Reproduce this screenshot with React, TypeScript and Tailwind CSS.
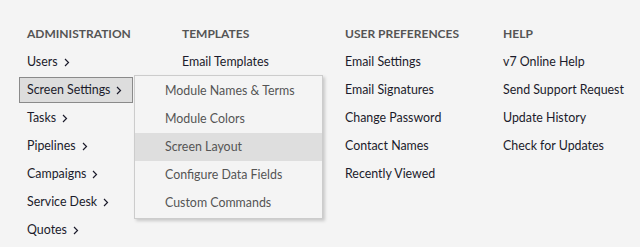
import React from 'react';

const ADMIN_ITEMS = ['Users', 'Screen Settings', 'Tasks', 'Pipelines', 'Campaigns', 'Service Desk', 'Quotes'];

const SUBMENU = ['Module Names & Terms', 'Module Colors', 'Screen Layout', 'Configure Data Fields', 'Custom Commands'];

const COLUMNS = [
    { title: 'TEMPLATES', width: 'w-[163px]', items: ['Email Templates'] },
    {
        title: 'USER PREFERENCES',
        width: 'w-[158px]',
        items: ['Email Settings', 'Email Signatures', 'Change Password', 'Contact Names', 'Recently Viewed'],
    },
    {
        title: 'HELP',
        width: 'w-[137px]',
        items: ['v7 Online Help', 'Send Support Request', 'Update History', 'Check for Updates'],
    },
];

const Chevron = () => (
    <svg width="6" height="9" viewBox="0 0 6 9" className="ml-[6px] mt-[1px] shrink-0">
        <path d="M1 1 L4.5 4.5 L1 8" fill="none" stroke="currentColor" strokeWidth="1.2" />
    </svg>
);

export default function App() {
    const active = 'Screen Settings';
    const highlighted = 'Screen Layout';

    return (
        <div
            className="w-[640px] h-[247px] bg-[#f4f4f4] text-[12.4px] text-[#1b1b2b] overflow-hidden flex pl-[19px] pt-[24px] whitespace-nowrap"
            style={{ fontFamily: '"Segoe UI", Lato, sans-serif' }}
        >
            {/* Administration column with flyout */}
            <div className="w-[163px] shrink-0 flex flex-col">
                <div className="h-[25px] pl-[8px] font-bold text-[12px] text-[#555] leading-[20px]">ADMINISTRATION</div>
                {ADMIN_ITEMS.map((item) => (
                    <div key={item} className="relative h-[28px]">
                        <div
                            className={`inline-flex items-center h-[26px] pl-[7px] pr-[17px] border ${
                                item === active ? 'bg-[#dddddd] border-[#8a8a8a] w-[114px]' : 'border-transparent'
                            }`}
                        >
                            {item}
                            <Chevron />
                        </div>
                        {item === active && (
                            <div className="absolute left-[115px] top-[-2px] z-10 w-[189px] bg-[#f4f4f4] border border-[#cccccc] shadow-[2px_2px_3px_rgba(0,0,0,0.18)] py-[1px]">
                                {SUBMENU.map((sub) => (
                                    <div
                                        key={sub}
                                        className={`h-[28px] flex items-center pl-[30px] text-[#555] ${
                                            sub === highlighted ? 'bg-[#dedede]' : ''
                                        }`}
                                    >
                                        {sub}
                                    </div>
                                ))}
                            </div>
                        )}
                    </div>
                ))}
            </div>

            {COLUMNS.map((col) => (
                <div key={col.title} className={`${col.width} shrink-0 flex flex-col`}>
                    <div className="h-[25px] font-bold text-[12px] text-[#555] leading-[20px]">{col.title}</div>
                    {col.items.map((item) => (
                        <div key={item} className="h-[28px] pb-[2px] flex items-center">
                            {item}
                        </div>
                    ))}
                </div>
            ))}
        </div>
    );
}
